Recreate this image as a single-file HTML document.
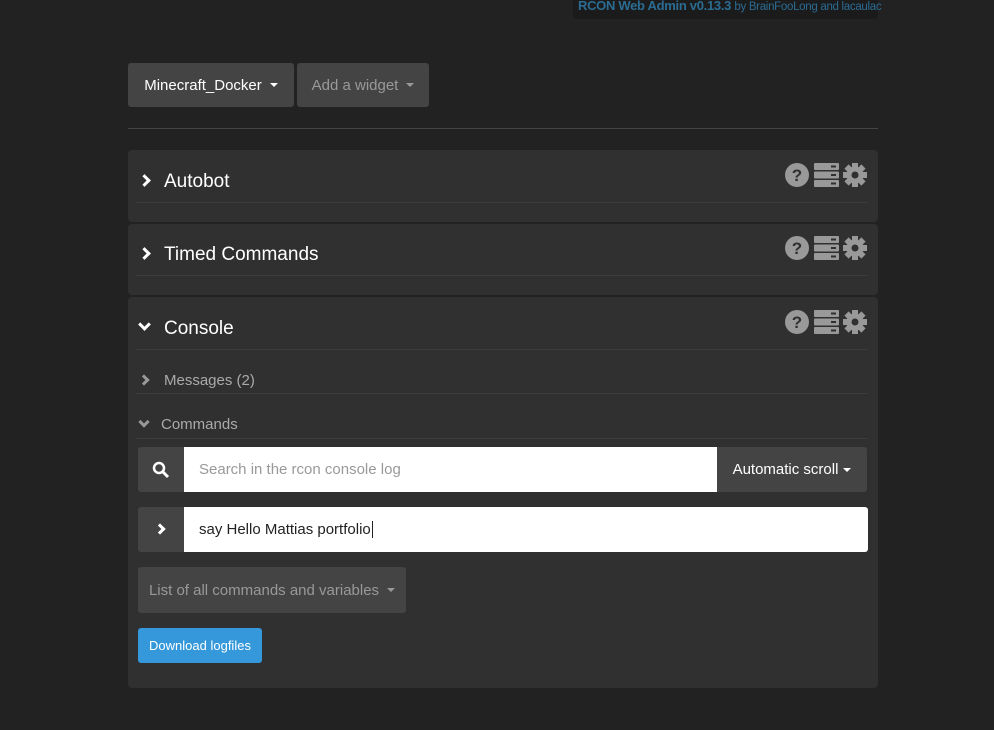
<!DOCTYPE html>
<html><head><style>
*{box-sizing:border-box;margin:0;padding:0}
body{width:994px;height:730px;background:#222;font-family:"Liberation Sans",sans-serif;position:relative;overflow:hidden;color:#fff}
.abs{position:absolute}
.top{left:573px;top:0;width:305px;height:19px;background:#1b1b1b;border-radius:0 0 4px 4px;color:#2b6c93;font-size:13px;padding-left:5px;line-height:12px;white-space:nowrap;letter-spacing:-0.3px}
.top b{font-size:13px}
.top small{font-size:11.5px}
.btn{background:#444;border-radius:3px;font-size:15px;display:flex;align-items:center;justify-content:center}
.caret{display:inline-block;border-left:4px solid transparent;border-right:4px solid transparent;border-top:4px solid currentColor;margin-left:8px;vertical-align:middle}
.panel{left:128px;width:750px;background:#303030;border-radius:4px}
.hdr{position:absolute;left:8px;right:10px;height:1px;background:#3c3c3c}
.title{position:absolute;left:36px;font-size:19px;color:#fff}
.chev{position:absolute;left:12px;width:9px;height:9px;border-right:3px solid #fff;border-bottom:3px solid #fff}
.icons{position:absolute;left:657px;display:flex;gap:4px;align-items:center}
.in{background:#fff;position:absolute}
</style></head><body>
<div class="abs top"><b>RCON Web Admin v0.13.3</b> <small>by BrainFooLong and lacaulac</small></div>
<div class="abs btn" style="left:128px;top:63px;width:166px;height:44px">Minecraft_Docker<span class="caret"></span></div>
<div class="abs btn" style="left:297px;top:63px;width:132px;height:44px;color:#999">Add a widget<span class="caret"></span></div>
<div class="abs" style="left:128px;top:128px;width:750px;height:1px;background:#444"></div>

<svg width="0" height="0" style="position:absolute"><defs>
<g id="ic">
<circle cx="12" cy="12" r="12" fill="#999"/><text x="12" y="18" font-size="17" font-weight="bold" fill="#303030" text-anchor="middle" font-family="Liberation Sans">?</text>
<g transform="translate(29,0)" fill="#999"><rect width="25" height="7" rx="1"/><rect y="8.5" width="25" height="7" rx="1"/><rect y="17" width="25" height="7" rx="1"/><rect x="17" y="2.5" width="5" height="2" fill="#303030"/><rect x="17" y="11" width="5" height="2" fill="#303030"/><rect x="17" y="19.5" width="5" height="2" fill="#303030"/></g>
<g transform="translate(70,12)" fill="#999"><circle r="8.5"/><g><rect x="-3" y="-12" width="6" height="24"/><rect x="-12" y="-3" width="24" height="6"/><rect x="-3" y="-12" width="6" height="24" transform="rotate(45)"/><rect x="-3" y="-12" width="6" height="24" transform="rotate(-45)"/></g><circle r="3.5" fill="#303030"/></g>
</g></defs></svg>

<div class="abs panel" style="top:150px;height:72px">
<div class="chev" style="top:26px;transform:rotate(-45deg)"></div>
<div class="title" style="top:21px">Autobot</div>
<svg class="icons" style="top:13px" width="84" height="25"><use href="#ic"/></svg>
<div class="hdr" style="top:52px"></div>
</div>
<div class="abs panel" style="top:224px;height:71px">
<div class="chev" style="top:25px;transform:rotate(-45deg)"></div>
<div class="title" style="top:20px">Timed Commands</div>
<svg class="icons" style="top:12px" width="84" height="25"><use href="#ic"/></svg>
<div class="hdr" style="top:51px"></div>
</div>
<div class="abs panel" style="top:297px;height:391px">
<div class="chev" style="top:23px;transform:rotate(45deg)"></div>
<div class="title" style="top:21px">Console</div>
<svg class="icons" style="top:13px" width="84" height="25"><use href="#ic"/></svg>
<div class="hdr" style="top:52px"></div>
<div style="position:absolute;left:12px;top:79px;width:8px;height:8px;border-right:3px solid #999;border-bottom:3px solid #999;transform:rotate(-45deg)"></div>
<div style="position:absolute;left:36px;top:75px;font-size:15px;color:#aaa">Messages (2)</div>
<div class="hdr" style="top:96px"></div>
<div style="position:absolute;left:12px;top:121px;width:8px;height:8px;border-right:3px solid #999;border-bottom:3px solid #999;transform:rotate(45deg)"></div>
<div style="position:absolute;left:33px;top:119px;font-size:15px;color:#aaa">Commands</div>
<div class="hdr" style="top:141px"></div>
<div style="position:absolute;left:10px;top:150px;width:46px;height:45px;background:#444;border-radius:3px 0 0 3px"></div>
<svg style="position:absolute;left:24px;top:164px" width="18" height="18"><circle cx="7" cy="7" r="5" stroke="#fff" stroke-width="2.5" fill="none"/><line x1="11" y1="11" x2="16" y2="16" stroke="#fff" stroke-width="3"/></svg>
<div class="in" style="left:56px;top:150px;width:533px;height:45px;color:#999;font-size:15px;padding:14px 15px">Search in the rcon console log</div>
<div style="position:absolute;left:589px;top:150px;width:150px;height:45px;background:#444;border-radius:0 3px 3px 0;font-size:15px;display:flex;align-items:center;justify-content:center">Automatic scroll<span class="caret" style="margin-left:5px"></span></div>
<div style="position:absolute;left:10px;top:210px;width:46px;height:45px;background:#444;border-radius:3px 0 0 3px"></div>
<div style="position:absolute;left:28px;top:228px;width:8px;height:8px;border-right:3px solid #fff;border-bottom:3px solid #fff;transform:rotate(-45deg)"></div>
<div class="in" style="left:56px;top:210px;width:684px;height:45px;color:#222;font-size:15px;padding:14px 15px;border-radius:0 3px 3px 0">say Hello Mattias portfolio<span style="border-left:1px solid #222;margin-left:1px"></span></div>
<div class="btn" style="position:absolute;left:10px;top:270px;width:268px;height:46px;color:#999;font-size:15px">List of all commands and variables<span class="caret"></span></div>
<div style="position:absolute;left:10px;top:331px;width:124px;height:35px;background:#3498db;border-radius:3px;font-size:13px;display:flex;align-items:center;justify-content:center">Download logfiles</div>
</div>
</body></html>
